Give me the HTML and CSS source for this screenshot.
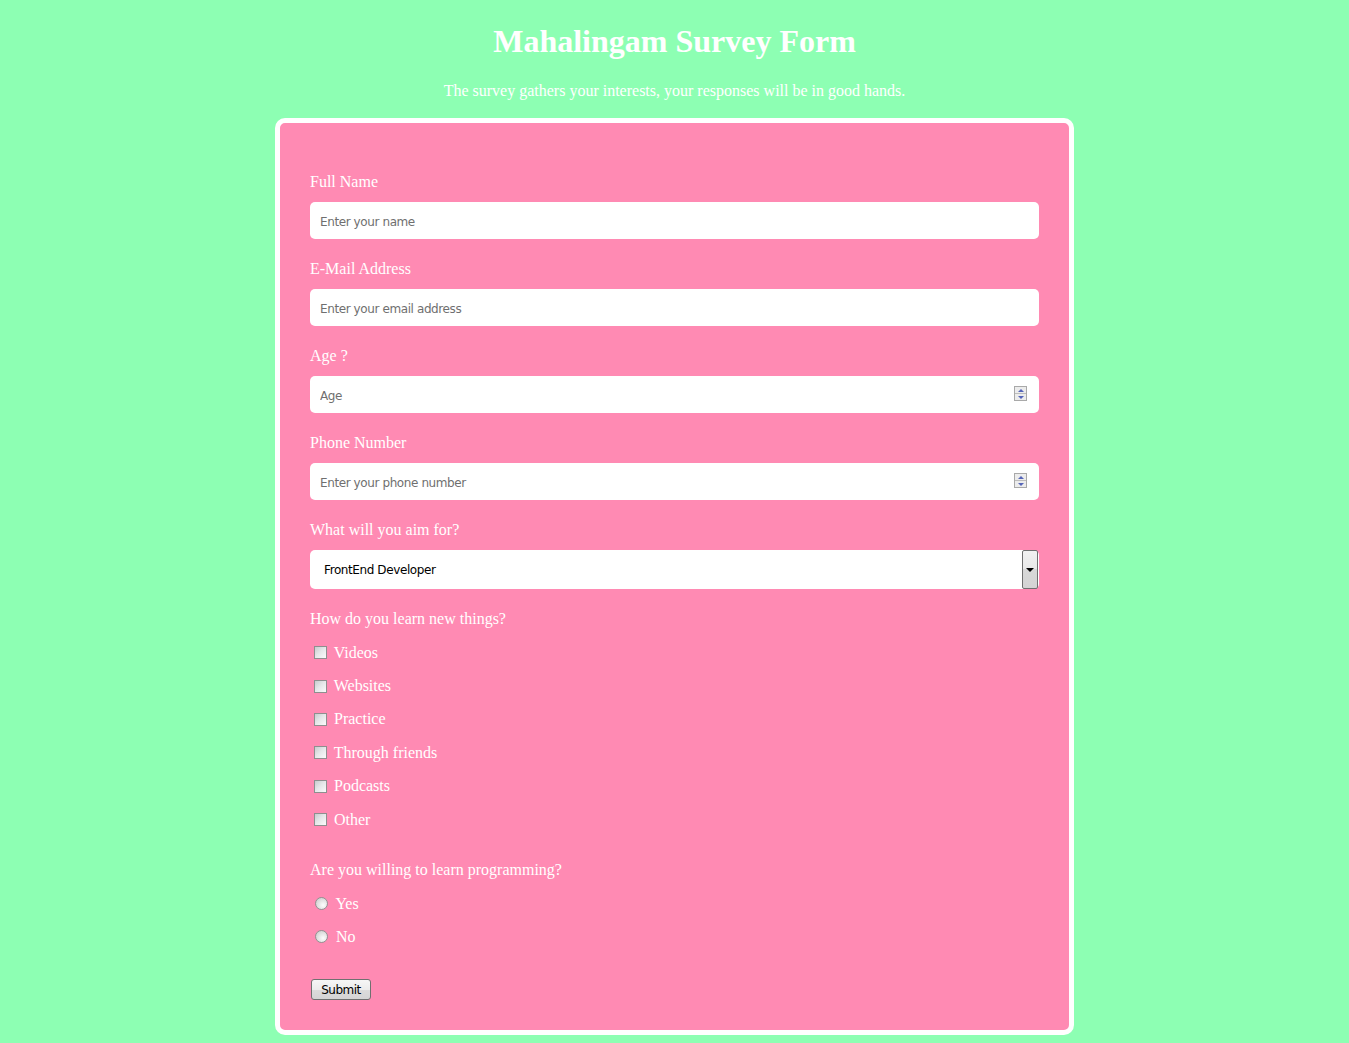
FILE: index.html
```html
<!DOCTYPE html>
<html lang="en">
<head>
<meta charset="utf-8">
<title>Mahalingam Survey Form</title>
<link rel="stylesheet" href="styles.css">
</head>
<body>
<header class="header">
  <h1 id="title" class="title">Mahalingam Survey Form</h1>
  <p id="description" class="description">The survey gathers your interests, your responses will be in good hands.</p>
</header>
<form id="survey-form" class="survey">
  <div class="group">
    <label class="field-label" for="name">Full Name</label>
    <input class="field" id="name" type="text" placeholder="Enter your name">
  </div>
  <div class="group">
    <label class="field-label" for="email">E-Mail Address</label>
    <input class="field" id="email" type="text" placeholder="Enter your email address">
  </div>
  <div class="group">
    <label class="field-label" for="age">Age ?</label>
    <div class="num-wrap">
      <input class="field" id="age" type="text" placeholder="Age">
      <span class="spinner"><span class="spin up"></span><span class="spin down"></span></span>
    </div>
  </div>
  <div class="group">
    <label class="field-label" for="phone">Phone Number</label>
    <div class="num-wrap">
      <input class="field" id="phone" type="text" placeholder="Enter your phone number">
      <span class="spinner"><span class="spin up"></span><span class="spin down"></span></span>
    </div>
  </div>
  <div class="group">
    <label class="field-label" for="dropdown">What will you aim for?</label>
    <div class="select-wrap">
      <select class="select" id="dropdown">
        <option>FrontEnd Developer</option>
        <option>BackEnd Developer</option>
        <option>FullStack Developer</option>
      </select>
      <span class="select-btn"></span>
    </div>
  </div>
  <div class="field-label">How do you learn new things?</div>
  <div class="checks">
    <label class="row"><input class="box" type="checkbox"> Videos</label>
    <label class="row"><input class="box" type="checkbox"> Websites</label>
    <label class="row"><input class="box" type="checkbox"> Practice</label>
    <label class="row"><input class="box" type="checkbox"> Through friends</label>
    <label class="row"><input class="box" type="checkbox"> Podcasts</label>
    <label class="row"><input class="box" type="checkbox"> Other</label>
  </div>
  <div class="field-label">Are you willing to learn programming?</div>
  <div class="radios">
    <label class="row"><input class="radio" type="radio" name="willing"> Yes</label>
    <label class="row"><input class="radio" type="radio" name="willing"> No</label>
  </div>
  <button class="submit" id="submit" type="submit">Submit</button>
</form>
</body>
</html>
```
FILE: styles.css
```css
html, body {
  margin: 0;
  padding: 0;
}
body {
  background: #8dffb3;
  font-family: "Liberation Serif", "Times New Roman", serif;
  color: #ffffff;
}
.header {
  text-align: center;
}
.title {
  margin: 22px 0 0;
  font-size: 32px;
  line-height: 38px;
  font-weight: bold;
}
.description {
  margin: 21px 0 0;
  font-size: 16px;
  line-height: 20px;
}
.survey {
  box-sizing: border-box;
  width: 799px;
  margin: 17px auto 0;
  background: #ff8ab3;
  border: 5px solid #ffffff;
  border-radius: 10px;
  padding: 48px 30px 30px 30px;
}
.group {
  margin-bottom: 19px;
}
.field-label {
  display: block;
  font-size: 16px;
  line-height: 22px;
  margin-bottom: -2px;
}
.group .field-label {
  margin-bottom: 9px;
}
.field {
  box-sizing: border-box;
  display: block;
  width: 100%;
  height: 37px;
  border: none;
  border-radius: 5px;
  background: #ffffff;
  padding: 2px 10px 0;
  font-family: "DejaVu Sans", Verdana, sans-serif;
  font-size: 12px;
  letter-spacing: -0.4px;
  color: #000;
  outline: none;
}
.field::placeholder {
  color: #6f6f6f;
}
.num-wrap, .select-wrap {
  position: relative;
}
.spinner {
  position: absolute;
  right: 12px;
  top: 10px;
  width: 13px;
  height: 15px;
  display: flex;
  flex-direction: column;
  box-sizing: border-box;
  border: 1px solid #a9a9a9;
  background: #ececec;
}
.spin {
  flex: 1;
  position: relative;
}
.spin.up {
  border-bottom: 1px solid #bdbdbd;
}
.spin::after {
  content: "";
  position: absolute;
  left: 3px;
  width: 0;
  height: 0;
  border-left: 3px solid transparent;
  border-right: 3px solid transparent;
}
.spin.up::after {
  top: 2px;
  border-bottom: 3px solid #5565b8;
}
.spin.down::after {
  top: 2px;
  border-top: 3px solid #5565b8;
}
.select {
  box-sizing: border-box;
  display: block;
  width: 100%;
  height: 39px;
  -webkit-appearance: none;
  appearance: none;
  border: none;
  border-radius: 5px;
  background: #ffffff;
  padding: 1px 14px 0;
  font-family: "DejaVu Sans", Verdana, sans-serif;
  font-size: 12px;
  letter-spacing: -0.4px;
  color: #000;
  outline: none;
}
.select-btn {
  position: absolute;
  right: 1px;
  top: 0;
  bottom: 0;
  width: 16px;
  box-sizing: border-box;
  border: 1px solid #707070;
  border-radius: 2px;
  background: linear-gradient(#f2f2f2 0%, #e8e8e8 49%, #d8d8d8 50%, #d4d4d4 100%);
}
.select-btn::after {
  content: "";
  position: absolute;
  left: 3px;
  top: 17px;
  border-left: 4px solid transparent;
  border-right: 4px solid transparent;
  border-top: 4px solid #000;
}
.checks {
  margin-top: 8px;
  margin-bottom: 23px;
}
.radios {
  margin-top: 8px;
}
.row {
  display: flex;
  align-items: center;
  height: 33.4px;
  font-size: 16px;
  white-space: pre;
}
.radios .row {
  height: 33px;
}
.box {
  -webkit-appearance: none;
  appearance: none;
  box-sizing: border-box;
  width: 13px;
  height: 13px;
  margin: 0 3px 0 4px;
  border: 1px solid #8e8f8f;
  background: linear-gradient(135deg, #c8cbce 0%, #e4e6e8 45%, #fbfbfb 100%);
}
.radio {
  -webkit-appearance: none;
  appearance: none;
  box-sizing: border-box;
  width: 13px;
  height: 13px;
  margin: 0 4px 0 5px;
  border: 1px solid #929292;
  border-radius: 50%;
  background: radial-gradient(circle at 65% 65%, #fdfdfd 0%, #e2e2e2 50%, #c4c4c4 100%);
}
.submit {
  display: block;
  margin: 26px 0 0 1px;
  box-sizing: border-box;
  width: 60px;
  height: 21px;
  padding: 0;
  border: 1px solid #707070;
  border-radius: 3px;
  background: linear-gradient(#f6f6f6 0%, #ececec 50%, #dcdcdc 51%, #d4d4d4 100%);
  font-family: "DejaVu Sans", Tahoma, sans-serif;
  font-size: 12px;
  letter-spacing: -0.5px;
  color: #000;
}
```
